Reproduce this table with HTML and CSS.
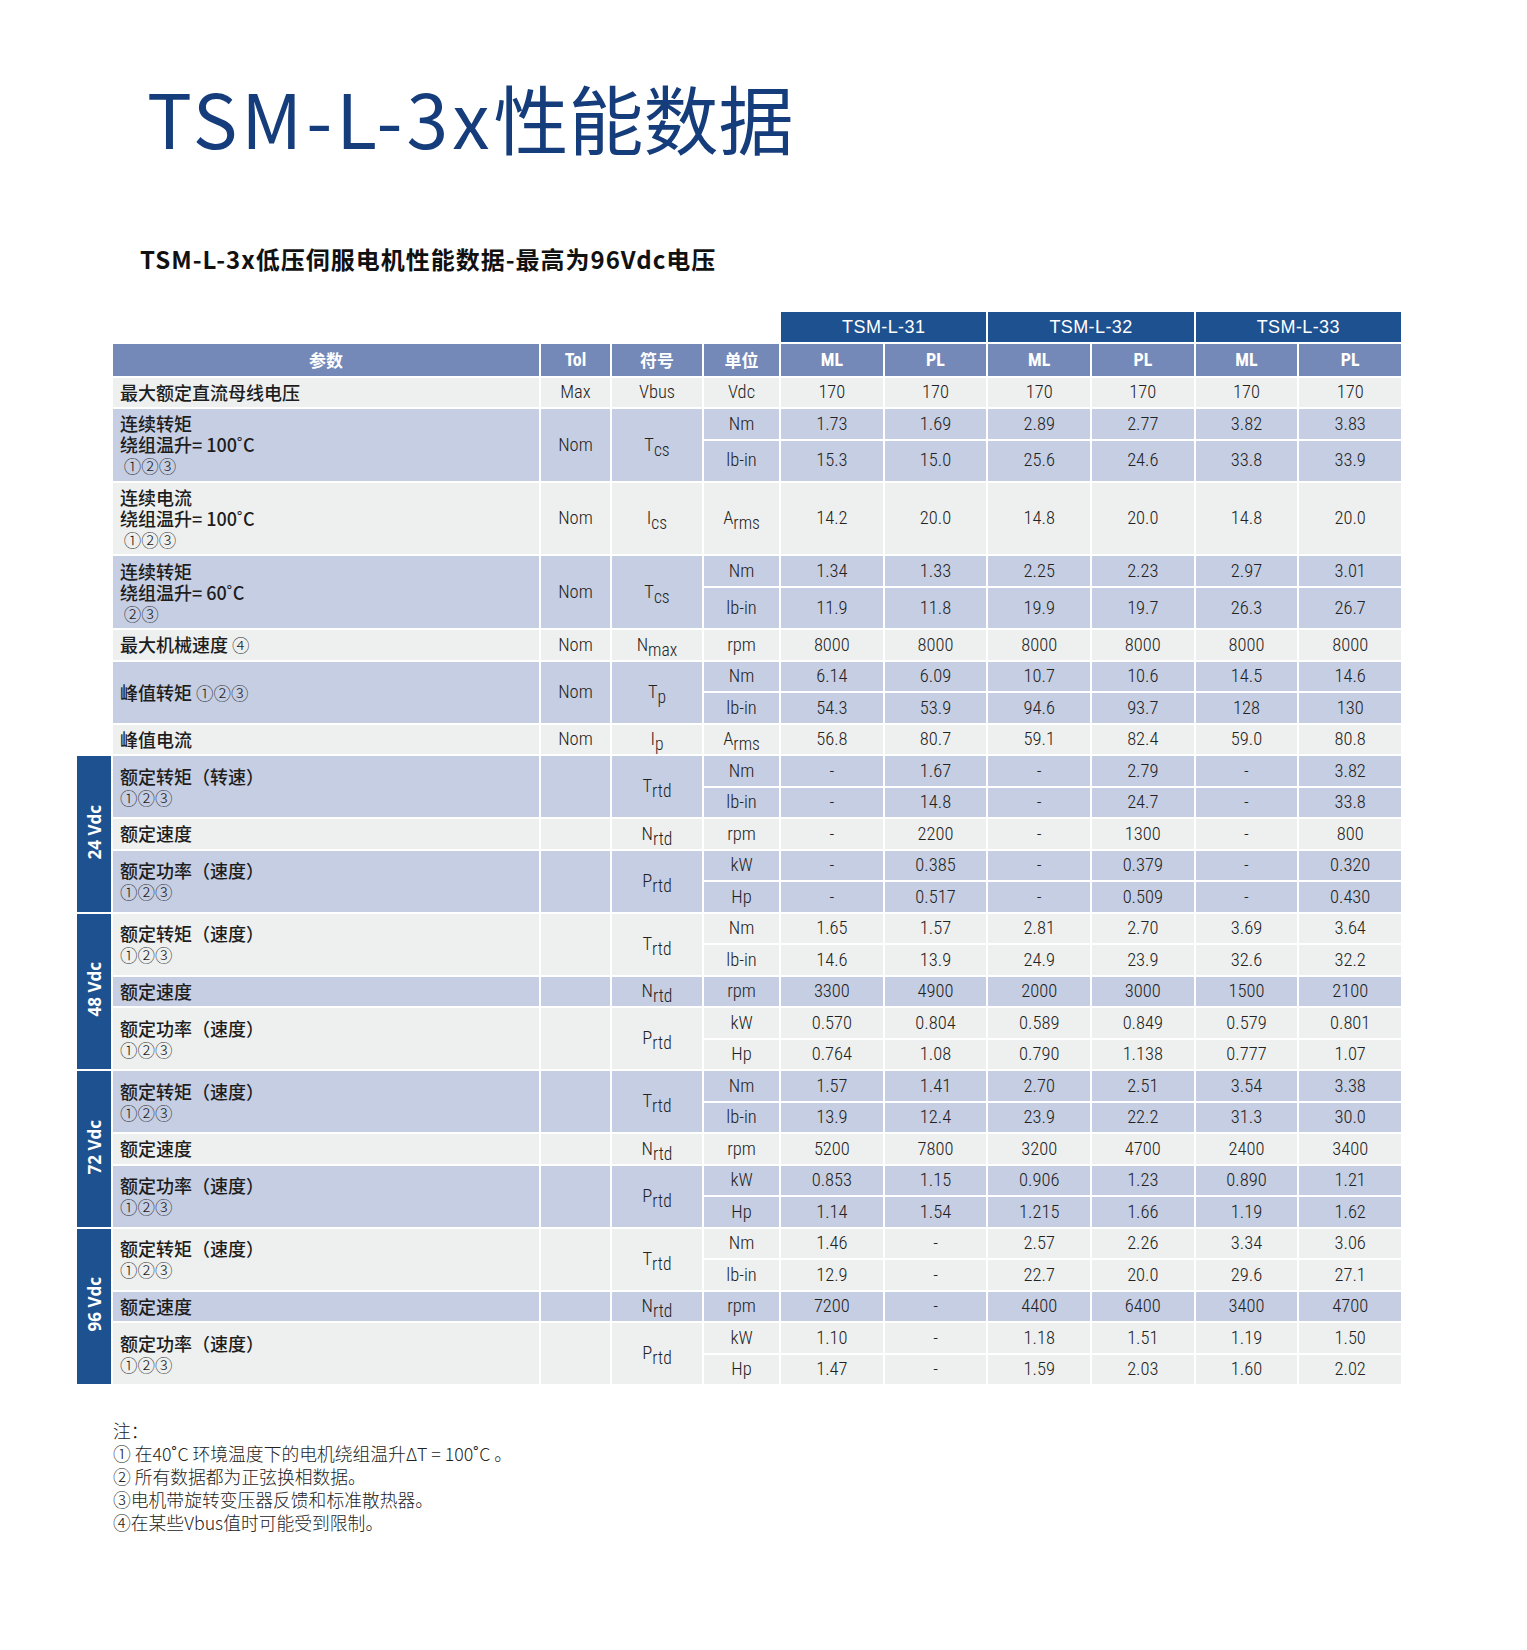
FILE: index.html
```html
<!DOCTYPE html>
<html lang="zh-CN">
<head>
<meta charset="utf-8">
<title>TSM-L-3x性能数据</title>
<link rel="stylesheet" href="styles.css">
</head>
<body>
<div class="page">
  <h1 class="title"><span class="lat">TSM-L-3x</span>性能数据</h1>
  <h2 class="subtitle">TSM-L-3x低压伺服电机性能数据-最高为96Vdc电压</h2>

  <table class="spec">
    <colgroup>
      <col class="c-grp"><col class="c-par"><col class="c-tol"><col class="c-sym"><col class="c-unit">
      <col class="c-val"><col class="c-val"><col class="c-val"><col class="c-val"><col class="c-val"><col class="c-val">
    </colgroup>
    <tr class="h-model">
      <td class="blank" colspan="5"></td>
      <th colspan="2" class="model">TSM-L-31</th>
      <th colspan="2" class="model">TSM-L-32</th>
      <th colspan="2" class="model">TSM-L-33</th>
    </tr>
    <tr class="h-col">
      <td class="blank"></td>
      <th class="hd cjk">参数</th><th class="hd">Tol</th><th class="hd cjk">符号</th><th class="hd cjk">单位</th>
      <th class="hd">ML</th><th class="hd">PL</th><th class="hd">ML</th><th class="hd">PL</th><th class="hd">ML</th><th class="hd">PL</th>
    </tr>

    <tr class="r lt">
      <td class="blank"></td>
      <td class="par">最大额定直流母线电压</td><td>Max</td><td>Vbus</td><td>Vdc</td>
      <td>170</td><td>170</td><td>170</td><td>170</td><td>170</td><td>170</td>
    </tr>

    <tr class="r bl">
      <td class="blank" rowspan="2"></td>
      <td class="par" rowspan="2">连续转矩<br>绕组温升= 100˚C<br><span class="circ">&nbsp;①②③</span></td>
      <td rowspan="2">Nom</td><td rowspan="2">T<sub>cs</sub></td><td>Nm</td>
      <td>1.73</td><td>1.69</td><td>2.89</td><td>2.77</td><td>3.82</td><td>3.83</td>
    </tr>
    <tr class="s2 bl">
      <td>lb-in</td>
      <td>15.3</td><td>15.0</td><td>25.6</td><td>24.6</td><td>33.8</td><td>33.9</td>
    </tr>

    <tr class="t lt">
      <td class="blank"></td>
      <td class="par">连续电流<br>绕组温升= 100˚C<br><span class="circ">&nbsp;①②③</span></td>
      <td>Nom</td><td>I<sub>cs</sub></td><td>A<sub>rms</sub></td>
      <td>14.2</td><td>20.0</td><td>14.8</td><td>20.0</td><td>14.8</td><td>20.0</td>
    </tr>

    <tr class="r bl">
      <td class="blank" rowspan="2"></td>
      <td class="par" rowspan="2">连续转矩<br>绕组温升= 60˚C<br><span class="circ">&nbsp;②③</span></td>
      <td rowspan="2">Nom</td><td rowspan="2">T<sub>cs</sub></td><td>Nm</td>
      <td>1.34</td><td>1.33</td><td>2.25</td><td>2.23</td><td>2.97</td><td>3.01</td>
    </tr>
    <tr class="s2 bl">
      <td>lb-in</td>
      <td>11.9</td><td>11.8</td><td>19.9</td><td>19.7</td><td>26.3</td><td>26.7</td>
    </tr>

    <tr class="r lt">
      <td class="blank"></td>
      <td class="par">最大机械速度 <span class="circ">④</span></td><td>Nom</td><td>N<sub>max</sub></td><td>rpm</td>
      <td>8000</td><td>8000</td><td>8000</td><td>8000</td><td>8000</td><td>8000</td>
    </tr>

    <tr class="r bl">
      <td class="blank" rowspan="2"></td>
      <td class="par" rowspan="2">峰值转矩 <span class="circ">①②③</span></td>
      <td rowspan="2">Nom</td><td rowspan="2">T<sub>p</sub></td><td>Nm</td>
      <td>6.14</td><td>6.09</td><td>10.7</td><td>10.6</td><td>14.5</td><td>14.6</td>
    </tr>
    <tr class="r bl">
      <td>lb-in</td>
      <td>54.3</td><td>53.9</td><td>94.6</td><td>93.7</td><td>128</td><td>130</td>
    </tr>

    <tr class="r lt">
      <td class="blank"></td>
      <td class="par">峰值电流</td><td>Nom</td><td>I<sub>p</sub></td><td>A<sub>rms</sub></td>
      <td>56.8</td><td>80.7</td><td>59.1</td><td>82.4</td><td>59.0</td><td>80.8</td>
    </tr>

    <!-- 24 Vdc -->
    <tr class="r bl">
      <td class="grp" rowspan="5"><span class="vlabel">24 Vdc</span></td>
      <td class="par" rowspan="2">额定转矩（转速）<br><span class="circ">①②③</span></td>
      <td rowspan="2"></td><td rowspan="2">T<sub>rtd</sub></td><td>Nm</td>
      <td>-</td><td>1.67</td><td>-</td><td>2.79</td><td>-</td><td>3.82</td>
    </tr>
    <tr class="r bl">
      <td>lb-in</td>
      <td>-</td><td>14.8</td><td>-</td><td>24.7</td><td>-</td><td>33.8</td>
    </tr>
    <tr class="r lt">
      <td class="par">额定速度</td><td></td><td>N<sub>rtd</sub></td><td>rpm</td>
      <td>-</td><td>2200</td><td>-</td><td>1300</td><td>-</td><td>800</td>
    </tr>
    <tr class="r bl">
      <td class="par" rowspan="2">额定功率（速度）<br><span class="circ">①②③</span></td>
      <td rowspan="2"></td><td rowspan="2">P<sub>rtd</sub></td><td>kW</td>
      <td>-</td><td>0.385</td><td>-</td><td>0.379</td><td>-</td><td>0.320</td>
    </tr>
    <tr class="r bl">
      <td>Hp</td>
      <td>-</td><td>0.517</td><td>-</td><td>0.509</td><td>-</td><td>0.430</td>
    </tr>

    <!-- 48 Vdc -->
    <tr class="r lt">
      <td class="grp" rowspan="5"><span class="vlabel">48 Vdc</span></td>
      <td class="par" rowspan="2">额定转矩（速度）<br><span class="circ">①②③</span></td>
      <td rowspan="2"></td><td rowspan="2">T<sub>rtd</sub></td><td>Nm</td>
      <td>1.65</td><td>1.57</td><td>2.81</td><td>2.70</td><td>3.69</td><td>3.64</td>
    </tr>
    <tr class="r lt">
      <td>lb-in</td>
      <td>14.6</td><td>13.9</td><td>24.9</td><td>23.9</td><td>32.6</td><td>32.2</td>
    </tr>
    <tr class="r bl">
      <td class="par">额定速度</td><td></td><td>N<sub>rtd</sub></td><td>rpm</td>
      <td>3300</td><td>4900</td><td>2000</td><td>3000</td><td>1500</td><td>2100</td>
    </tr>
    <tr class="r lt">
      <td class="par" rowspan="2">额定功率（速度）<br><span class="circ">①②③</span></td>
      <td rowspan="2"></td><td rowspan="2">P<sub>rtd</sub></td><td>kW</td>
      <td>0.570</td><td>0.804</td><td>0.589</td><td>0.849</td><td>0.579</td><td>0.801</td>
    </tr>
    <tr class="r lt">
      <td>Hp</td>
      <td>0.764</td><td>1.08</td><td>0.790</td><td>1.138</td><td>0.777</td><td>1.07</td>
    </tr>

    <!-- 72 Vdc -->
    <tr class="r bl">
      <td class="grp" rowspan="5"><span class="vlabel">72 Vdc</span></td>
      <td class="par" rowspan="2">额定转矩（速度）<br><span class="circ">①②③</span></td>
      <td rowspan="2"></td><td rowspan="2">T<sub>rtd</sub></td><td>Nm</td>
      <td>1.57</td><td>1.41</td><td>2.70</td><td>2.51</td><td>3.54</td><td>3.38</td>
    </tr>
    <tr class="r bl">
      <td>lb-in</td>
      <td>13.9</td><td>12.4</td><td>23.9</td><td>22.2</td><td>31.3</td><td>30.0</td>
    </tr>
    <tr class="r lt">
      <td class="par">额定速度</td><td></td><td>N<sub>rtd</sub></td><td>rpm</td>
      <td>5200</td><td>7800</td><td>3200</td><td>4700</td><td>2400</td><td>3400</td>
    </tr>
    <tr class="r bl">
      <td class="par" rowspan="2">额定功率（速度）<br><span class="circ">①②③</span></td>
      <td rowspan="2"></td><td rowspan="2">P<sub>rtd</sub></td><td>kW</td>
      <td>0.853</td><td>1.15</td><td>0.906</td><td>1.23</td><td>0.890</td><td>1.21</td>
    </tr>
    <tr class="r bl">
      <td>Hp</td>
      <td>1.14</td><td>1.54</td><td>1.215</td><td>1.66</td><td>1.19</td><td>1.62</td>
    </tr>

    <!-- 96 Vdc -->
    <tr class="r lt">
      <td class="grp" rowspan="5"><span class="vlabel">96 Vdc</span></td>
      <td class="par" rowspan="2">额定转矩（速度）<br><span class="circ">①②③</span></td>
      <td rowspan="2"></td><td rowspan="2">T<sub>rtd</sub></td><td>Nm</td>
      <td>1.46</td><td>-</td><td>2.57</td><td>2.26</td><td>3.34</td><td>3.06</td>
    </tr>
    <tr class="r lt">
      <td>lb-in</td>
      <td>12.9</td><td>-</td><td>22.7</td><td>20.0</td><td>29.6</td><td>27.1</td>
    </tr>
    <tr class="r bl">
      <td class="par">额定速度</td><td></td><td>N<sub>rtd</sub></td><td>rpm</td>
      <td>7200</td><td>-</td><td>4400</td><td>6400</td><td>3400</td><td>4700</td>
    </tr>
    <tr class="r lt">
      <td class="par" rowspan="2">额定功率（速度）<br><span class="circ">①②③</span></td>
      <td rowspan="2"></td><td rowspan="2">P<sub>rtd</sub></td><td>kW</td>
      <td>1.10</td><td>-</td><td>1.18</td><td>1.51</td><td>1.19</td><td>1.50</td>
    </tr>
    <tr class="r lt">
      <td>Hp</td>
      <td>1.47</td><td>-</td><td>1.59</td><td>2.03</td><td>1.60</td><td>2.02</td>
    </tr>
  </table>

  <div class="notes">
    <p>注：</p>
    <p>① 在40˚C 环境温度下的电机绕组温升ΔT = 100˚C 。</p>
    <p>② 所有数据都为正弦换相数据。</p>
    <p>③电机带旋转变压器反馈和标准散热器。</p>
    <p>④在某些Vbus值时可能受到限制。</p>
  </div>
</div>
</body>
</html>
```

FILE: styles.css
```css
html, body {
  margin: 0;
  padding: 0;
  background: #ffffff;
}

.page {
  width: 1527px;
  padding: 77px 0 100px 0;
  box-sizing: border-box;
}

.title {
  margin: 0 0 0 147px;
  font-family: "Noto Sans CJK SC", sans-serif;
  font-weight: 400;
  font-size: 75px;
  line-height: 80px;
  color: #163d7b;
  white-space: nowrap;
}

.title .lat {
  letter-spacing: 4px;
}

.subtitle {
  margin: 87px 0 0 140px;
  font-family: "Noto Sans CJK SC", sans-serif;
  font-weight: 700;
  font-size: 24px;
  line-height: 30px;
  letter-spacing: 1px;
  color: #111111;
  white-space: nowrap;
}

.spec {
  margin: 38px 0 0 77px;
  border-collapse: separate;
  border-spacing: 0;
  table-layout: fixed;
  width: 1326px;
  font-family: "Liberation Sans Narrow", "Roboto Condensed", "DejaVu Sans Condensed", "Roboto", sans-serif;
  font-stretch: condensed;
  font-weight: 300;
  font-size: 18.5px;
  color: #222222;
}

.c-grp { width: 36px; }
.c-par { width: 428px; }
.c-tol { width: 71px; }
.c-sym { width: 92px; }
.c-unit { width: 77px; }
.c-val { width: 103.67px; }

.spec td,
.spec th {
  padding: 0;
  border-right: 2px solid #ffffff;
  border-bottom: 2px solid #ffffff;
  text-align: center;
  vertical-align: middle;
  line-height: 1;
  white-space: nowrap;
}

.spec .blank {
  background: transparent;
}

.h-model { height: 32px; }
.h-col { height: 33.6px; }
.r { height: 31.5px; }
.s2 { height: 42.2px; }
.t { height: 73.7px; }

.spec .model {
  background: #1e5190;
  color: #ffffff;
  font-family: "Liberation Sans", Arial, sans-serif;
  font-stretch: normal;
  font-weight: 400;
  font-size: 18px;
  letter-spacing: 0.4px;
}

.spec .hd {
  background: #7489b8;
  color: #ffffff;
  font-weight: 700;
  font-size: 18px;
}

.spec .hd.cjk {
  font-family: "Noto Sans CJK SC", sans-serif;
  font-stretch: normal;
  font-size: 17px;
}

.lt td:not(.blank):not(.grp) { background: #eef0ef; }
.bl td:not(.blank):not(.grp) { background: #c6cee3; }

.spec td.par {
  text-align: left;
  padding-left: 7px;
  font-family: "Noto Sans CJK SC", sans-serif;
  font-stretch: normal;
  font-weight: 500;
  font-size: 18px;
  line-height: 21px;
  color: #1d1d1d;
}

.circ {
  font-weight: 300;
  font-size: 17.5px;
}

.spec sub {
  font-size: 0.95em;
  vertical-align: -5px;
  line-height: 0;
}

.spec td.grp {
  background: #1e5190;
  color: #ffffff;
}

.vlabel {
  display: inline-block;
  writing-mode: vertical-rl;
  transform: rotate(180deg);
  font-family: "Open Sans", "DejaVu Sans", sans-serif;
  font-stretch: normal;
  font-weight: 700;
  font-size: 17px;
  line-height: 1;
}

.notes {
  margin: 33px 0 0 113px;
  font-family: "Noto Sans CJK SC", sans-serif;
  font-weight: 300;
  font-size: 17.8px;
  line-height: 23px;
  color: #222222;
}

.notes p {
  margin: 0;
}
```
